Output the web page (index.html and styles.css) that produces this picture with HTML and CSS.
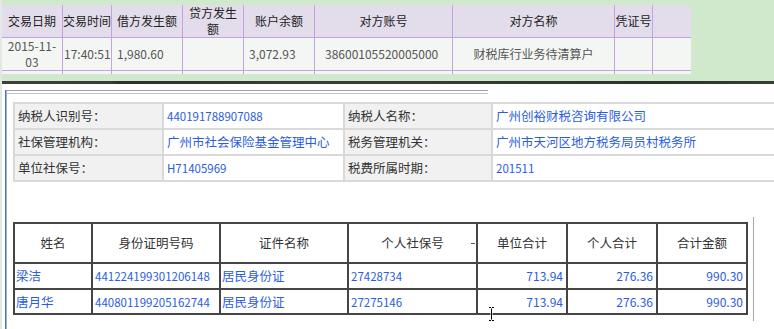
FILE: index.html
```html
<!DOCTYPE html>
<html lang="zh-CN">
<head>
<meta charset="utf-8">
<title>社保缴费明细</title>
<link rel="stylesheet" href="styles.css">
</head>
<body>
<div class="page">
  <div class="top">
    <table class="txn">
      <colgroup>
        <col class="w60"><col class="w49"><col class="w71"><col class="w61"><col class="w71"><col class="w138"><col class="w162"><col class="w38"><col class="w39">
      </colgroup>
      <tr class="head">
        <th>交易日期</th><th>交易时间</th><th>借方发生额</th><th class="wrap">贷方发生额</th><th>账户余额</th><th>对方账号</th><th>对方名称</th><th>凭证号</th><th></th>
      </tr>
      <tr class="row">
        <td class="c">2015-11-03</td><td class="tight">17:40:51</td><td>1,980.60</td><td></td><td>3,072.93</td><td class="acct">38600105520005000</td><td class="c">财税库行业务待清算户</td><td></td><td></td>
      </tr>
      <tr class="stub">
        <td></td><td></td><td></td><td></td><td></td><td></td><td></td><td></td><td></td>
      </tr>
    </table>
  </div>
  <div class="bar"></div>
  <div class="lower">
    <div class="frame">
      <div class="frame-in">
        <div class="rule"></div>
        <table class="info">
          <colgroup>
            <col class="i1"><col class="i2"><col class="i3"><col class="i4">
          </colgroup>
          <tr>
            <td class="lab">纳税人识别号：</td><td class="val num">440191788907088</td>
            <td class="lab">纳税人名称：</td><td class="val">广州创裕财税咨询有限公司</td>
          </tr>
          <tr>
            <td class="lab">社保管理机构：</td><td class="val">广州市社会保险基金管理中心</td>
            <td class="lab">税务管理机关：</td><td class="val">广州市天河区地方税务局员村税务所</td>
          </tr>
          <tr class="last">
            <td class="lab">单位社保号：</td><td class="val num">H71405969</td>
            <td class="lab">税费所属时期：</td><td class="val num">201511</td>
          </tr>
        </table>
        <table class="people">
          <colgroup>
            <col class="p1"><col class="p2"><col class="p3"><col class="p4"><col class="p5"><col class="p6"><col class="p7">
          </colgroup>
          <tr class="ph">
            <th>姓名</th><th>身份证明号码</th><th>证件名称</th><th>个人社保号</th><th>单位合计</th><th>个人合计</th><th>合计金额</th>
          </tr>
          <tr class="pr">
            <td>梁洁</td><td class="num">441224199301206148</td><td>居民身份证</td><td class="num">27428734</td><td class="amt">713.94</td><td class="amt">276.36</td><td class="amt">990.30</td>
          </tr>
          <tr class="pr last">
            <td>唐月华</td><td class="num">440801199205162744</td><td>居民身份证</td><td class="num">27275146</td><td class="amt">713.94</td><td class="amt">276.36</td><td class="amt">990.30</td>
          </tr>
        </table>
      </div>
    </div>
    <div class="dash"></div>
    <div class="vline"></div>
    <svg class="cursor" width="7" height="16" viewBox="0 0 7 16">
      <path d="M0.5 0.5h2.5v1.5h1v-1.5h2.5v2h-2v11h2v2h-2.5v-1.5h-1v1.5h-2.5v-2h2v-11h-2z" fill="#fff"/>
      <path d="M1 1h2v1.5h1V1h2v1h-2v12h2v1h-2v-1.5H3V15H1v-1h2V2H1z" fill="#000"/>
    </svg>
  </div>
</div>
</body>
</html>
```

FILE: styles.css
```css
* { box-sizing: border-box; }
html, body { margin: 0; padding: 0; background: #fff; }
body {
  width: 774px;
  height: 329px;
  overflow: hidden;
  font-family: "Noto Sans CJK SC", "Noto Sans", sans-serif;
}
.page {
  height: 329px;
  border-left: 2px solid #e2e9e2;
  display: flex;
  flex-direction: column;
}

/* ---------- top transaction table ---------- */
.top {
  height: 81px;
  flex: none;
  background: #d0e8cb;
  padding-top: 5px;
  overflow: hidden;
}
.txn {
  border-collapse: separate;
  border-spacing: 0;
  table-layout: fixed;
  width: 689px;
  font-size: 12px;
  line-height: 16px;
}
.w60 { width: 60px; } .w49 { width: 49px; } .w71 { width: 71px; } .w61 { width: 61px; }
.w138 { width: 138px; } .w162 { width: 162px; } .w38 { width: 38px; } .w39 { width: 39px; }
.txn th, .txn td {
  border-left: 1px solid #c6a2e2;
  vertical-align: middle;
  overflow: hidden;
}
.txn th:first-child, .txn td:first-child { border-left: 0; }
.txn .head th {
  height: 33px;
  padding: 0;
  white-space: nowrap;
  background: #e3dcea;
  color: #222;
  font-weight: normal;
  text-align: center;
  border-bottom: 1px solid #c6a2e2;
}
.txn .head th.wrap { white-space: normal; padding: 0 2px; }
.txn .row td {
  height: 33px;
  background: #f4f6f4;
  color: #555;
  text-align: left;
  padding: 0 5px;
  border-bottom: 1px solid #c6a2e2;
}
.txn .row td.c { text-align: center; }
.txn .row td.tight { padding: 0 0 0 1px; }
.txn .row td.acct { padding-left: 10px; }
.txn .stub td { height: 3px; background: #f4f6f4; padding: 0; }

/* ---------- dark divider ---------- */
.bar {
  height: 3px;
  flex: none;
  background: linear-gradient(90deg, #3e3f3a 0%, #3a3b36 14%, #2e2f2b 15%, #3b3c37 40%, #35362f 70%, #2f302b 85%, #3b3b36 100%);
}

/* ---------- lower panel ---------- */
.lower {
  position: relative;
  flex: 1;
  padding-left: 3px;
  overflow: hidden;
  background: #fff;
}
.frame {
  margin-top: 6px;
  height: 240px;
  border-left: 1px solid #3c7fc4;
}
.frame-in {
  height: 100%;
  border-left: 1px solid #a3abb3;
}
.rule {
  margin-top: 1px;
  width: 481px;
  height: 4px;
  border-top: 1px solid #9ca3aa;
  border-bottom: 1px solid #b9cad8;
}

.info {
  margin: 8px 0 0 6px;
  border-collapse: separate;
  border-spacing: 0;
  table-layout: fixed;
  width: 778px;
  font-size: 12.5px;
  line-height: 16px;
}
.i1 { width: 149px; } .i2 { width: 181px; } .i3 { width: 148px; } .i4 { width: 300px; }
.info td {
  height: 26px;
  border-top: 2px solid #d9d9d9;
  border-left: 2px solid #d9d9d9;
  padding: 0 0 0 3px;
  vertical-align: middle;
  white-space: nowrap;
}
.info tr.last td { height: 28px; border-bottom: 2px solid #d9d9d9; }
.info td.lab { background: #f1f1f1; color: #333; }
.info td.val { background: #fff; color: #2b5de0; }
.info td.num { font-size: 11.5px; }

.people {
  margin: 40px 0 0 6px;
  border-collapse: separate;
  border-spacing: 0;
  table-layout: fixed;
  width: 735px;
  font-size: 12.5px;
  line-height: 16px;
}
.p1 { width: 78px; } .p2 { width: 128px; } .p3 { width: 128px; } .p4 { width: 129px; }
.p5 { width: 90px; } .p6 { width: 90px; } .p7 { width: 92px; }
.people th, .people td {
  border-top: 2px solid #454545;
  border-left: 2px solid #454545;
  vertical-align: middle;
  white-space: nowrap;
}
.people th:last-child, .people td:last-child { border-right: 2px solid #454545; }
.people .ph th {
  height: 40px;
  font-weight: normal;
  color: #333;
  text-align: center;
  padding: 0;
}
.people .pr td {
  height: 26px;
  color: #2b5de0;
  padding: 0 0 0 1px;
}
.people .pr.last td { height: 27px; border-bottom: 2px solid #454545; }
.people td.num { font-size: 11.5px; padding-left: 2px; }
.people td.amt { text-align: right; padding: 0 3px 0 0; font-size: 12px; }

/* overlays */
.dash {
  position: absolute;
  left: 469px;
  top: 159px;
  width: 4px;
  height: 1px;
  background: #555;
}
.vline {
  position: absolute;
  left: 751px;
  top: 133px;
  width: 1px;
  height: 104px;
  background: #a6a6a6;
}
.cursor {
  position: absolute;
  left: 486px;
  top: 222px;
}
```
